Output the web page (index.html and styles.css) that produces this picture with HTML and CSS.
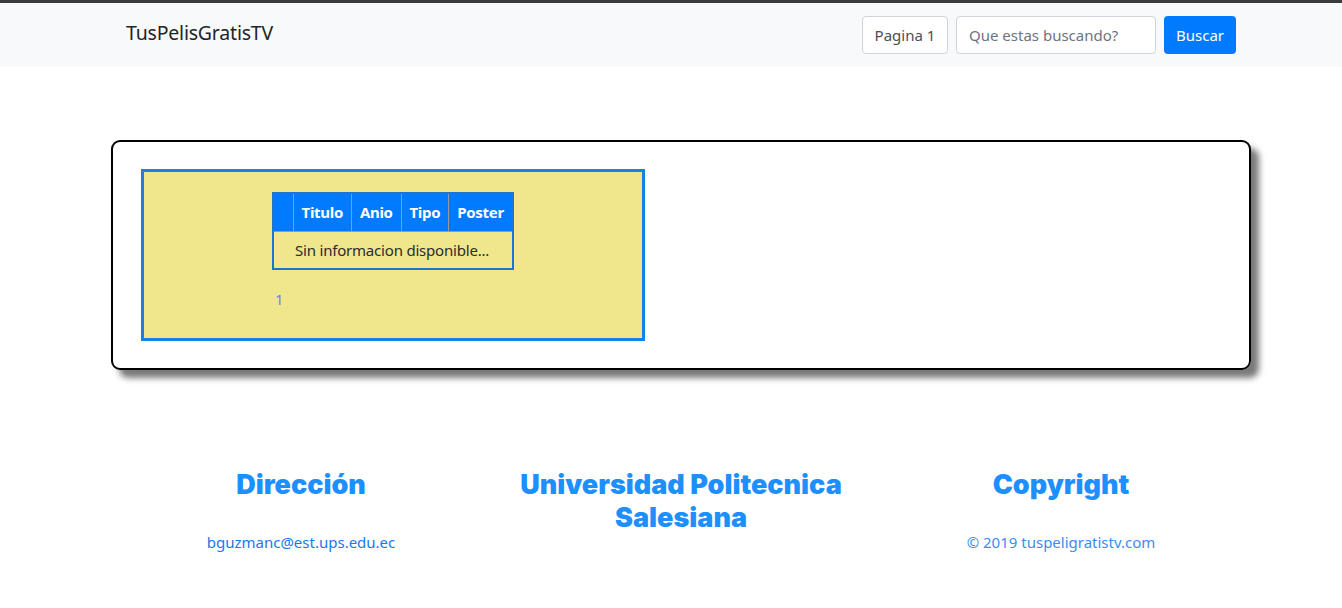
FILE: index.html
```html
<!DOCTYPE html>
<html lang="es">
<head>
<meta charset="utf-8">
<title>TusPelisGratisTV</title>
<link rel="stylesheet" href="styles.css">
</head>
<body>
<div class="topline"></div>
<nav class="navbar">
  <div class="container nav-inner">
    <a class="brand">TusPelisGratisTV</a>
    <form class="search">
      <span class="page-box">Pagina 1</span>
      <input class="search-input" type="text" placeholder="Que estas buscando?">
      <button class="btn-primary" type="button">Buscar</button>
    </form>
  </div>
</nav>

<main class="container main">
  <section class="card">
    <div class="panel">
      <div class="table-wrap">
        <table class="movies">
          <thead>
            <tr><th class="blank"></th><th>Titulo</th><th>Anio</th><th>Tipo</th><th>Poster</th></tr>
          </thead>
          <tbody>
            <tr><td colspan="5">Sin informacion disponible...</td></tr>
          </tbody>
        </table>
        <div class="pager"><a>1</a></div>
      </div>
    </div>
  </section>
</main>

<footer class="container footer">
  <div class="col">
    <h2>Dirección</h2>
    <p class="email">bguzmanc@est.ups.edu.ec</p>
  </div>
  <div class="col">
    <h2>Universidad Politecnica Salesiana</h2>
  </div>
  <div class="col">
    <h2>Copyright</h2>
    <p class="copy">© 2019 tuspeligratistv.com</p>
  </div>
</footer>
</body>
</html>
```

FILE: styles.css
```css
* { box-sizing: border-box; }
html, body { margin: 0; padding: 0; }
body {
  font-family: "Noto Sans", "Open Sans", sans-serif;
  font-size: 16px;
  color: #212529;
  background: #fff;
}
.topline { height: 3px; background: #3c3c3c; }
.container {
  width: 1160px;
  margin: 0 auto;
  padding-left: 20px;
}
.navbar { background: #f8f9fa; height: 64px; }
.nav-inner {
  display: flex;
  align-items: center;
  justify-content: space-between;
  padding-left: 35px;
  padding-right: 15px;
  height: 100%;
}
.brand {
  font-size: 19.5px;
  color: #212529;
  letter-spacing: -0.2px;
  margin-top: -6px;
}
.search { display: flex; align-items: center; }
.page-box {
  height: 38px;
  width: 86px;
  border: 1px solid #ced4da;
  border-radius: 4px;
  background: #fff;
  color: #495057;
  font-size: 15px;
  display: flex;
  align-items: center;
  justify-content: center;
  margin-right: 8px;
}
.search-input {
  width: 200px;
  height: 38px;
  border: 1px solid #ced4da;
  border-radius: 4px;
  padding: 0 12px;
  font-family: inherit;
  font-size: 15px;
  color: #495057;
  margin-right: 8px;
}
.search-input::placeholder { color: #6c757d; }
.btn-primary {
  height: 38px;
  width: 72px;
  background: #007bff;
  color: #fff;
  border: none;
  border-radius: 4px;
  font-family: inherit;
  font-size: 15px;
}
.main { padding-top: 73px; }
.card {
  width: 1140px;
  height: 230px;
  border: 2px solid #000;
  border-radius: 9px;
  box-shadow: 8px 8px 6px #7a7a7a;
  padding: 27px 28px;
}
.panel {
  width: 504px;
  height: 172px;
  background: #f0e68c;
  border: 3px solid #1a80e8;
  padding-top: 20px;
  display: flex;
  justify-content: center;
}
.table-wrap { width: 242px; }
.movies {
  border-collapse: collapse;
  width: 242px;
  border: 2px solid #1a75d6;
}
.movies th {
  background: #007bff;
  color: #fff;
  font-weight: 700;
  font-size: 15px;
  height: 38px;
  padding: 0 7px;
  border-left: 1px solid #9a9a9a;
  border-bottom: 1px solid #9a9a9a;
  letter-spacing: -0.3px;
}
.movies th:first-child { border-left: none; }
.movies th.blank { width: 20px; padding: 0; }
.movies td {
  height: 38px;
  padding: 0 0 0 21px;
  font-size: 15px;
  color: #2b2b2b;
  letter-spacing: -0.2px;
}
.pager { padding: 19px 0 0 3px; font-size: 15px; }
.pager a { color: #7878ff; }
.footer {
  display: flex;
  padding-top: 98px;
  text-align: center;
}
.footer .col { width: 380px; }
.footer h2 {
  margin: 0;
  font-family: Inter, Lato, sans-serif;
  font-weight: 900;
  font-size: 27px;
  line-height: 33px;
  color: #1e8fff;
  padding: 0 20px;
  letter-spacing: 0;
}
.footer p { margin: 31px 0 0; font-size: 15px; }
.email { color: #1877f2; }
.copy { color: #3a8df5; }
```
